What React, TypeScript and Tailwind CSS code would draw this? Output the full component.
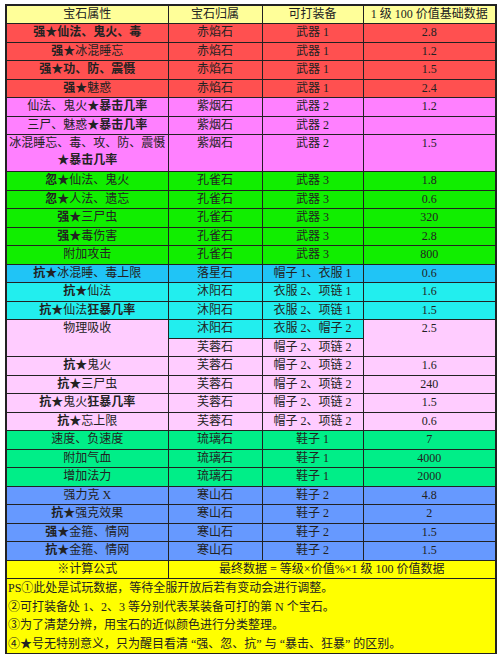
import React from "react";

type Row = {
  attr: string;
  stone: string;
  gear: string;
  value: string;
  bg: string;
  tall?: boolean;
};

// **...** marks the bold part of an attribute
const rows: Row[] = [
  { attr: "**强★仙法、鬼火、毒**", stone: "赤焰石", gear: "武器 1", value: "2.8", bg: "bg-[#ff5050]" },
  { attr: "**强★**冰混睡忘", stone: "赤焰石", gear: "武器 1", value: "1.2", bg: "bg-[#ff5050]" },
  { attr: "**强★功、防、震慑**", stone: "赤焰石", gear: "武器 1", value: "1.5", bg: "bg-[#ff5050]" },
  { attr: "**强★**魅惑", stone: "赤焰石", gear: "武器 1", value: "2.4", bg: "bg-[#ff5050]" },
  { attr: "仙法、鬼火**★暴击几率**", stone: "紫烟石", gear: "武器 2", value: "1.2", bg: "bg-[#ff80ff]" },
  { attr: "三尸、魅惑**★暴击几率**", stone: "紫烟石", gear: "武器 2", value: "", bg: "bg-[#ff80ff]" },
  { attr: "冰混睡忘、毒、攻、防、震慑|**★暴击几率**", stone: "紫烟石", gear: "武器 2", value: "1.5", bg: "bg-[#ff80ff]", tall: true },
  { attr: "**忽★**仙法、鬼火", stone: "孔雀石", gear: "武器 3", value: "1.8", bg: "bg-[#11ee00]" },
  { attr: "**忽★**人法、遗忘", stone: "孔雀石", gear: "武器 3", value: "0.6", bg: "bg-[#11ee00]" },
  { attr: "**强★**三尸虫", stone: "孔雀石", gear: "武器 3", value: "320", bg: "bg-[#11ee00]" },
  { attr: "**强★**毒伤害", stone: "孔雀石", gear: "武器 3", value: "2.8", bg: "bg-[#11ee00]" },
  { attr: "附加攻击", stone: "孔雀石", gear: "武器 3", value: "800", bg: "bg-[#11ee00]" },
  { attr: "**抗★**冰混睡、毒上限", stone: "落星石", gear: "帽子 1、衣服 1", value: "0.6", bg: "bg-[#20c4f6]" },
  { attr: "**抗★**仙法", stone: "沐阳石", gear: "衣服 2、项链 1", value: "1.6", bg: "bg-[#22eeee]" },
  { attr: "**抗★**仙法**狂暴几率**", stone: "沐阳石", gear: "衣服 2、项链 1", value: "1.5", bg: "bg-[#22eeee]" },
];

const rowsAfter: Row[] = [
  { attr: "**抗★**鬼火", stone: "芙蓉石", gear: "帽子 2、项链 2", value: "1.6", bg: "bg-[#ffccff]" },
  { attr: "**抗★**三尸虫", stone: "芙蓉石", gear: "帽子 2、项链 2", value: "240", bg: "bg-[#ffccff]" },
  { attr: "**抗★**鬼火**狂暴几率**", stone: "芙蓉石", gear: "帽子 2、项链 2", value: "1.5", bg: "bg-[#ffccff]" },
  { attr: "**抗★**忘上限", stone: "芙蓉石", gear: "帽子 2、项链 2", value: "0.6", bg: "bg-[#ffccff]" },
  { attr: "速度、负速度", stone: "琉璃石", gear: "鞋子 1", value: "7", bg: "bg-[#00ee88]" },
  { attr: "附加气血", stone: "琉璃石", gear: "鞋子 1", value: "4000", bg: "bg-[#00ee88]" },
  { attr: "增加法力", stone: "琉璃石", gear: "鞋子 1", value: "2000", bg: "bg-[#00ee88]" },
  { attr: "强力克 X", stone: "寒山石", gear: "鞋子 2", value: "4.8", bg: "bg-[#6699ff]" },
  { attr: "**抗★**强克效果", stone: "寒山石", gear: "鞋子 2", value: "2", bg: "bg-[#6699ff]" },
  { attr: "**强★**金箍、情网", stone: "寒山石", gear: "鞋子 2", value: "1.5", bg: "bg-[#6699ff]" },
  { attr: "**抗★**金箍、情网", stone: "寒山石", gear: "鞋子 2", value: "1.5", bg: "bg-[#6699ff]" },
];

function Attr({ text }: { text: string }) {
  const lines = text.split("|");
  return (
    <>
      {lines.map((line, i) => (
        <div key={i}>
          {line.split("**").map((part, j) =>
            j % 2 === 1 ? (
              <b key={j} className="font-bold">
                {part}
              </b>
            ) : (
              <span key={j}>{part}</span>
            )
          )}
        </div>
      ))}
    </>
  );
}

const td = "border border-[#222] p-0 align-top text-center";

function DataRow({ r }: { r: Row }) {
  return (
    <tr className={r.bg + (r.tall ? " h-[37px]" : " h-[18.5px]")}>
      <td className={td}>
        <Attr text={r.attr} />
      </td>
      <td className={td}>{r.stone}</td>
      <td className={td}>{r.gear}</td>
      <td className={td}>{r.value}</td>
    </tr>
  );
}

export default function App() {
  return (
    <div className="w-[500px] h-[654px] bg-white pt-[4px] pl-[5px] font-['Liberation_Serif','Noto_Sans_CJK_SC',serif] text-[12px] leading-[17px] text-[#222]">
      <table className="table-fixed border-collapse border-2 border-[#222] w-[490px]">
        <colgroup>
          <col className="w-[162px]" />
          <col className="w-[94px]" />
          <col className="w-[101px]" />
          <col className="w-[133px]" />
        </colgroup>
        <thead>
          <tr className="h-[18px] bg-[#ffff99]">
            <th className={td + " font-normal"}>宝石属性</th>
            <th className={td + " font-normal"}>宝石归属</th>
            <th className={td + " font-normal"}>可打装备</th>
            <th className={td + " font-normal"}>1 级 100 价值基础数据</th>
          </tr>
        </thead>
        <tbody>
          {rows.map((r, i) => (
            <DataRow key={i} r={r} />
          ))}
          <tr className="h-[18.5px]">
            <td rowSpan={2} className={td + " bg-[#ffccff]"}>
              物理吸收
            </td>
            <td className={td + " bg-[#22eeee]"}>沐阳石</td>
            <td className={td + " bg-[#22eeee]"}>衣服 2、帽子 2</td>
            <td rowSpan={2} className={td + " bg-[#ffccff]"}>
              2.5
            </td>
          </tr>
          <tr className="h-[18.5px]">
            <td className={td + " bg-[#ffccff]"}>芙蓉石</td>
            <td className={td + " bg-[#ffccff]"}>帽子 2、项链 2</td>
          </tr>
          {rowsAfter.map((r, i) => (
            <DataRow key={i} r={r} />
          ))}
          <tr className="h-[18.5px] bg-[#ffff00]">
            <td className={td}>※计算公式</td>
            <td colSpan={3} className={td}>
              最终数据 = 等级×价值%×1 级 100 价值数据
            </td>
          </tr>
          <tr className="bg-[#ffff00]">
            <td colSpan={4} className="border border-[#222] px-[1px] py-0 text-left leading-[18.5px]">
              <div>PS①此处是试玩数据，等待全服开放后若有变动会进行调整。</div>
              <div>②可打装备处 1、2、3 等分别代表某装备可打的第 N 个宝石。</div>
              <div>③为了清楚分辨，用宝石的近似颜色进行分类整理。</div>
              <div>
                ④<b className="font-bold">★</b>号无特别意义，只为醒目看清 “强、忽、抗” 与 “暴击、狂暴” 的区别。
              </div>
            </td>
          </tr>
        </tbody>
      </table>
    </div>
  );
}
